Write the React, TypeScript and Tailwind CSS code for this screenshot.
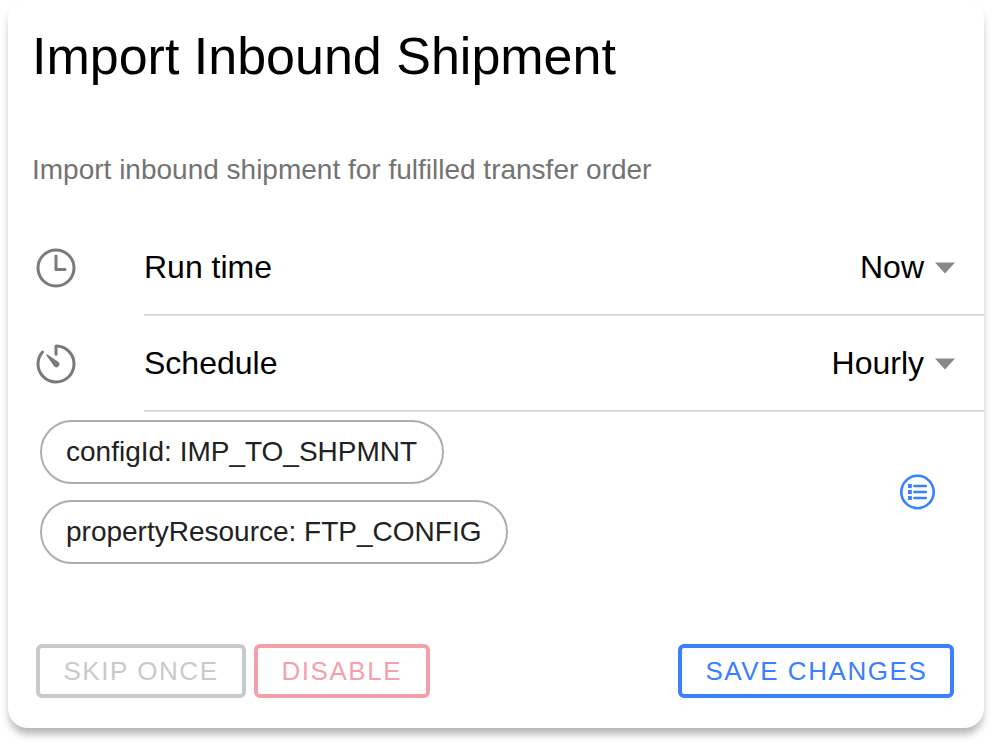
import React from "react";
import { IoTimeOutline, IoTimerOutline } from "react-icons/io5";

function Caret() {
  return (
    <svg width="20" height="12" viewBox="0 0 20 12" className="ml-[11px] mr-[29px] mt-0.5 text-[#888888]">
      <path d="M0 0.5h20L10 11.5z" fill="currentColor" />
    </svg>
  );
}

function ListCircle() {
  return (
    <svg width="36" height="36" viewBox="0 0 36 36" fill="none" stroke="currentColor" className="text-[#3880ff]">
      <circle cx="18.5" cy="18" r="16.2" strokeWidth="2.6" />
      <path d="M15.4 12h11.4M15.4 18h11.4M15.4 24h11.4" strokeWidth="2.6" strokeLinecap="round" />
      <path d="M9 12h3.8M9 18h3.8M9 24h3.8" strokeWidth="3.8" />
    </svg>
  );
}

function Row({ icon, label, value }: { icon: React.ReactNode; label: string; value: string }) {
  return (
    <div className="flex h-24 pl-6">
      <div className="flex w-28 items-center text-[48px] text-[#7a7a7a]">{icon}</div>
      <div className="flex flex-1 items-center border-b-2 border-[#dedede] text-[32px] leading-[38px] text-black">
        <span className="flex-1">{label}</span>
        <span>{value}</span>
        <Caret />
      </div>
    </div>
  );
}

function Chip({ text, width }: { text: string; width: string }) {
  return (
    <div
      className={`flex h-16 items-center rounded-full border-2 border-[#adadad] pl-6 text-[28px] leading-8 text-[#212121] ${width}`}
    >
      {text}
    </div>
  );
}

function ActionButton({ label, style }: { label: string; style: string }) {
  return (
    <button
      className={`flex h-[54px] items-center rounded-md border-4 pl-[23.4px] text-[26px] leading-[26px] tracking-[1.56px] whitespace-nowrap ${style}`}
    >
      {label}
    </button>
  );
}

export default function App() {
  return (
    <div className="h-[744px] w-[992px] overflow-hidden bg-white px-2 font-['Liberation_Sans',Arial,sans-serif]">
      <section className="flex h-[728px] flex-col rounded-[20px] bg-white shadow-[0_8px_8px_-2px_rgba(0,0,0,0.26),0_5px_10px_0_rgba(0,0,0,0.06)]">
        <h1 className="pl-6 pt-[26px] text-[52px] leading-[60px] text-black">Import Inbound Shipment</h1>
        <p className="mt-[68px] pl-6 text-[28px] leading-8 text-[#737373]">
          Import inbound shipment for fulfilled transfer order
        </p>
        <div className="mt-[34px]">
          <Row icon={<IoTimeOutline />} label="Run time" value="Now" />
          <Row icon={<IoTimerOutline />} label="Schedule" value="Hourly" />
        </div>
        <div className="flex items-center justify-between pl-8 pr-[49px] pt-2">
          <div className="flex flex-col gap-4">
            <Chip text="configId: IMP_TO_SHPMNT" width="w-[404px]" />
            <Chip text="propertyResource: FTP_CONFIG" width="w-[468px]" />
          </div>
          <ListCircle />
        </div>
        <div className="mt-20 flex gap-2 pl-7 pr-[30px]">
          <ActionButton label="SKIP ONCE" style="w-[210px] border-[#92949c] text-[#92949c] opacity-50" />
          <ActionButton label="DISABLE" style="w-[176px] border-[#eb445a] text-[#eb445a] opacity-50" />
          <ActionButton label="SAVE CHANGES" style="ml-auto w-[276px] border-[#3880ff] text-[#3880ff]" />
        </div>
      </section>
    </div>
  );
}
